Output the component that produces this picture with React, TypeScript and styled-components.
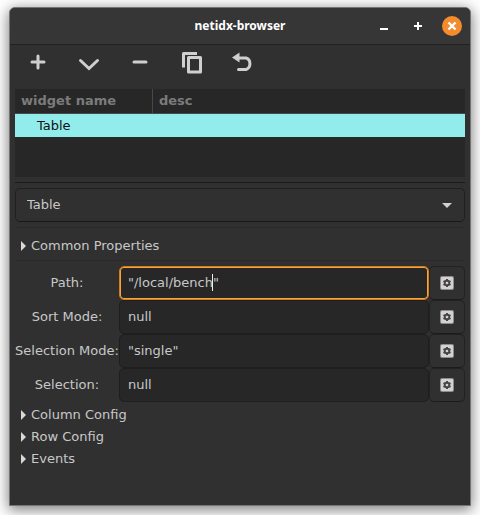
import React, { useState } from "react";
import styled, { createGlobalStyle } from "styled-components";

const GlobalStyle = createGlobalStyle`
  *, *::before, *::after { box-sizing: border-box; }
  body {
    margin: 0;
    background: #fff;
    color: #c8c8c8;
    font-family: "DejaVu Sans", sans-serif;
    font-size: 13px;
    line-height: 22px;
  }
  button, input, select { font: inherit; color: inherit; }
`;

const Desktop = styled.div`
  display: flex;
  min-height: 100vh;
  padding: 7px 9px 9px;
  overflow: hidden;
`;

const Window = styled.main`
  flex: 1;
  min-width: 0;
  border: 1px solid #747474;
  border-radius: 6px 6px 0 0;
  background: #303030;
  box-shadow: 0 3px 14px 1px rgba(0, 0, 0, 0.5);
`;

const TitleBar = styled.header`
  display: grid;
  grid-template-columns: 1fr auto 1fr;
  align-items: center;
  height: 37px;
  border-bottom: 1px solid #222;
  border-radius: 5px 5px 0 0;
  background: #363636;
`;

const Title = styled.h1`
  grid-column: 2;
  margin: 0;
  color: #fff;
  font: 700 12px/22px "Noto Sans", sans-serif;
`;

const WindowControls = styled.div`
  display: flex;
  justify-content: flex-end;
  gap: 14px;
  padding-right: 8px;
`;

const ControlButton = styled.button<{ $close?: boolean }>`
  display: grid;
  place-items: center;
  width: 20px;
  height: 20px;
  padding: 0;
  border: 0;
  border-radius: 50%;
  background: ${(p) => (p.$close ? "#f48c2d" : "transparent")};
  color: #fff;
`;

const Toolbar = styled.div`
  display: flex;
  gap: 27px;
  height: 44px;
  padding: 5px 16px;
`;

const ToolButton = styled.button`
  width: 24px;
  height: 24px;
  padding: 0;
  border: 0;
  background: transparent;
  color: #cfcfcf;

  svg { display: block; }
`;

const Content = styled.div`
  padding: 0 5px;
`;

const TreeView = styled.div`
  height: 88px;
  background: #272727;
`;

const Tree = styled.table`
  width: 100%;
  border-collapse: separate;
  border-spacing: 0;
  table-layout: fixed;
`;

const HeadCell = styled.th<{ $first?: boolean }>`
  width: ${(p) => (p.$first ? "138px" : "auto")};
  height: 25px;
  padding: 0 6px;
  border-bottom: 1px solid #484848;
  border-right: ${(p) => (p.$first ? "1px solid #484848" : "0")};
  color: #7b7b7b;
  text-align: left;
`;

const TreeCell = styled.td`
  height: 23px;
  padding: 0 22px;
  background: #93ecec;
  color: #111;
`;

const Separator = styled.hr<{ $soft?: boolean }>`
  height: 1px;
  margin: ${(p) => (p.$soft ? "3px 0 5px" : "5px 0")};
  border: 0;
  background: ${(p) => (p.$soft ? "#2a2a2a" : "#1b1b1b")};
`;

const ComboBox = styled.div`
  display: grid;
  align-items: center;
  margin-bottom: 5px;

  svg {
    grid-area: 1 / 1;
    justify-self: end;
    margin-right: 13px;
    pointer-events: none;
  }
`;

const Select = styled.select`
  grid-area: 1 / 1;
  appearance: none;
  width: 100%;
  height: 34px;
  padding: 0 11px;
  border: 1px solid #202020;
  border-bottom-color: #191919;
  border-radius: 5px;
  background: #303030;
`;

const ExpanderButton = styled.button`
  display: flex;
  align-items: center;
  gap: 5px;
  width: 100%;
  height: 22px;
  padding: 0 0 0 6px;
  border: 0;
  background: transparent;
`;

const Section = styled.section`
  padding-top: 2px;
`;

const Form = styled.form`
  display: grid;
  grid-template-columns: 104px 1fr 36px;
`;

const FieldLabel = styled.label`
  align-self: center;
  text-align: center;
  white-space: nowrap;
`;

const Field = styled.div`
  position: relative;
  min-width: 0;
`;

const TextInput = styled.input<{ $active?: boolean }>`
  display: block;
  width: 100%;
  height: 34px;
  padding: 0 8px 2px;
  border: 1px solid ${(p) => (p.$active ? "#d87d12" : "#1e1e1e")};
  border-radius: 5px;
  outline: 0;
  background: #272727;
  box-shadow: ${(p) => (p.$active ? "inset 0 0 0 1px #f5a34a" : "none")};
`;

const Caret = styled.span`
  position: absolute;
  top: 8px;
  left: 93px;
  width: 1px;
  height: 17px;
  background: #eee;
`;

const GearButton = styled.button`
  display: grid;
  place-items: center;
  height: 34px;
  padding: 0;
  border: 1px solid #222;
  border-bottom-color: #1b1b1b;
  border-radius: 5px;
  background: #303030;
`;

const PlusIcon = () => (
  <svg width="24" height="24" fill="none" stroke="currentColor" strokeWidth="3" strokeLinecap="round">
    <path d="M6 12h12M12 6v12" />
  </svg>
);
const ChevronIcon = () => (
  <svg width="24" height="24" fill="none" stroke="currentColor" strokeWidth="3" strokeLinecap="round">
    <path d="M3.5 10.5 12 18.5l8.500-8" />
  </svg>
);
const MinusIcon = () => (
  <svg width="24" height="24" fill="none" stroke="currentColor" strokeWidth="3" strokeLinecap="round">
    <path d="M6 12h12" />
  </svg>
);
const CopyIcon = () => (
  <svg width="24" height="24" fill="none" stroke="currentColor" strokeWidth="3" strokeLinejoin="round">
    <path d="M4.500 17.500V3.500H18" strokeLinecap="butt" />
    <rect x="9.500" y="7.500" width="12" height="14.500" />
  </svg>
);
const UndoIcon = () => (
  <svg width="24" height="24" fill="none" stroke="currentColor" strokeWidth="3" strokeLinecap="round">
    <path d="M9 8h7a5.500 6 0 0 1 0 11.500H8.500" />
    <path d="M2 7.500 9.500 2.500v10z" fill="currentColor" stroke="none" />
  </svg>
);

const TriangleIcon = () => (
  <svg width="5" height="10" fill="#d8d8d8">
    <path d="M0 0 5 5 0 10z" />
  </svg>
);

const GearIcon = () => (
  <svg width="14" height="14">
    <rect width="14" height="14" rx="2" fill="#8c8c8c" />
    <rect x="1" y="1" width="12" height="12" rx="1" fill="#d2d2d2" />
    <g stroke="#4a4340" fill="none">
      <circle cx="7" cy="7" r="2.300" strokeWidth="1.900" />
      <path
        d="M7 3v1.500M7 9.500V11M3.500 5l1.300.8M9.200 8.200l1.300.8M3.500 9l1.300-.8M9.200 5.800l1.300-.8"
        strokeWidth="1.900"
      />
    </g>
  </svg>
);

const tools = [
  { name: "Add", Icon: PlusIcon },
  { name: "Move down", Icon: ChevronIcon },
  { name: "Remove", Icon: MinusIcon },
  { name: "Duplicate", Icon: CopyIcon },
  { name: "Undo", Icon: UndoIcon },
];

const fields = [
  { id: "path", label: "Path:", value: '"/local/bench"', active: true },
  { id: "sort-mode", label: "Sort Mode:", value: "null" },
  { id: "selection-mode", label: "Selection Mode:", value: '"single"' },
  { id: "selection", label: "Selection:", value: "null" },
];

function Expander({ title }: { title: string }) {
  const [open, setOpen] = useState(false);
  return (
    <ExpanderButton type="button" aria-expanded={open} onClick={() => setOpen(!open)}>
      <TriangleIcon />
      {title}
    </ExpanderButton>
  );
}

export default function App() {
  return (
    <>
      <GlobalStyle />
      <Desktop>
        <Window>
          <TitleBar>
            <Title>netidx-browser</Title>
            <WindowControls>
              <ControlButton aria-label="Minimize">
                <svg width="20" height="20" fill="currentColor"><path d="M6 12h8v2H6z" /></svg>
              </ControlButton>
              <ControlButton aria-label="Maximize">
                <svg width="20" height="20" stroke="currentColor" strokeWidth="2"><path d="M6 10h8M10 6v8" /></svg>
              </ControlButton>
              <ControlButton $close aria-label="Close">
                <svg width="20" height="20" stroke="currentColor" strokeWidth="2.400"><path d="m6.500 6.500 7 7M13.500 6.500l-7 7" /></svg>
              </ControlButton>
            </WindowControls>
          </TitleBar>
          <Toolbar role="toolbar">
            {tools.map(({ name, Icon }) => (
              <ToolButton key={name} aria-label={name}><Icon /></ToolButton>
            ))}
          </Toolbar>
          <Content>
            <TreeView>
              <Tree>
                <thead>
                  <tr>
                    <HeadCell $first>widget name</HeadCell>
                    <HeadCell>desc</HeadCell>
                  </tr>
                </thead>
                <tbody>
                  <tr><TreeCell colSpan={2}>Table</TreeCell></tr>
                </tbody>
              </Tree>
            </TreeView>
            <Separator />
            <ComboBox>
              <Select aria-label="Widget type" defaultValue="Table">
                <option>Table</option>
              </Select>
              <svg width="10" height="5" fill="#d0d0d0"><path d="M0 0h10L5 5z" /></svg>
            </ComboBox>
            <Separator $soft />
            <Section><Expander title="Common Properties" /></Section>
            <Separator $soft />
            <Form>
              {fields.map((f) => (
                <React.Fragment key={f.id}>
                  <FieldLabel htmlFor={f.id}>{f.label}</FieldLabel>
                  <Field>
                    <TextInput id={f.id} $active={f.active} defaultValue={f.value} />
                    {f.active && <Caret />}
                  </Field>
                  <GearButton type="button" aria-label={`Edit ${f.label}`}><GearIcon /></GearButton>
                </React.Fragment>
              ))}
            </Form>
            <Section>
              <Expander title="Column Config" />
              <Expander title="Row Config" />
              <Expander title="Events" />
            </Section>
          </Content>
        </Window>
      </Desktop>
    </>
  );
}
